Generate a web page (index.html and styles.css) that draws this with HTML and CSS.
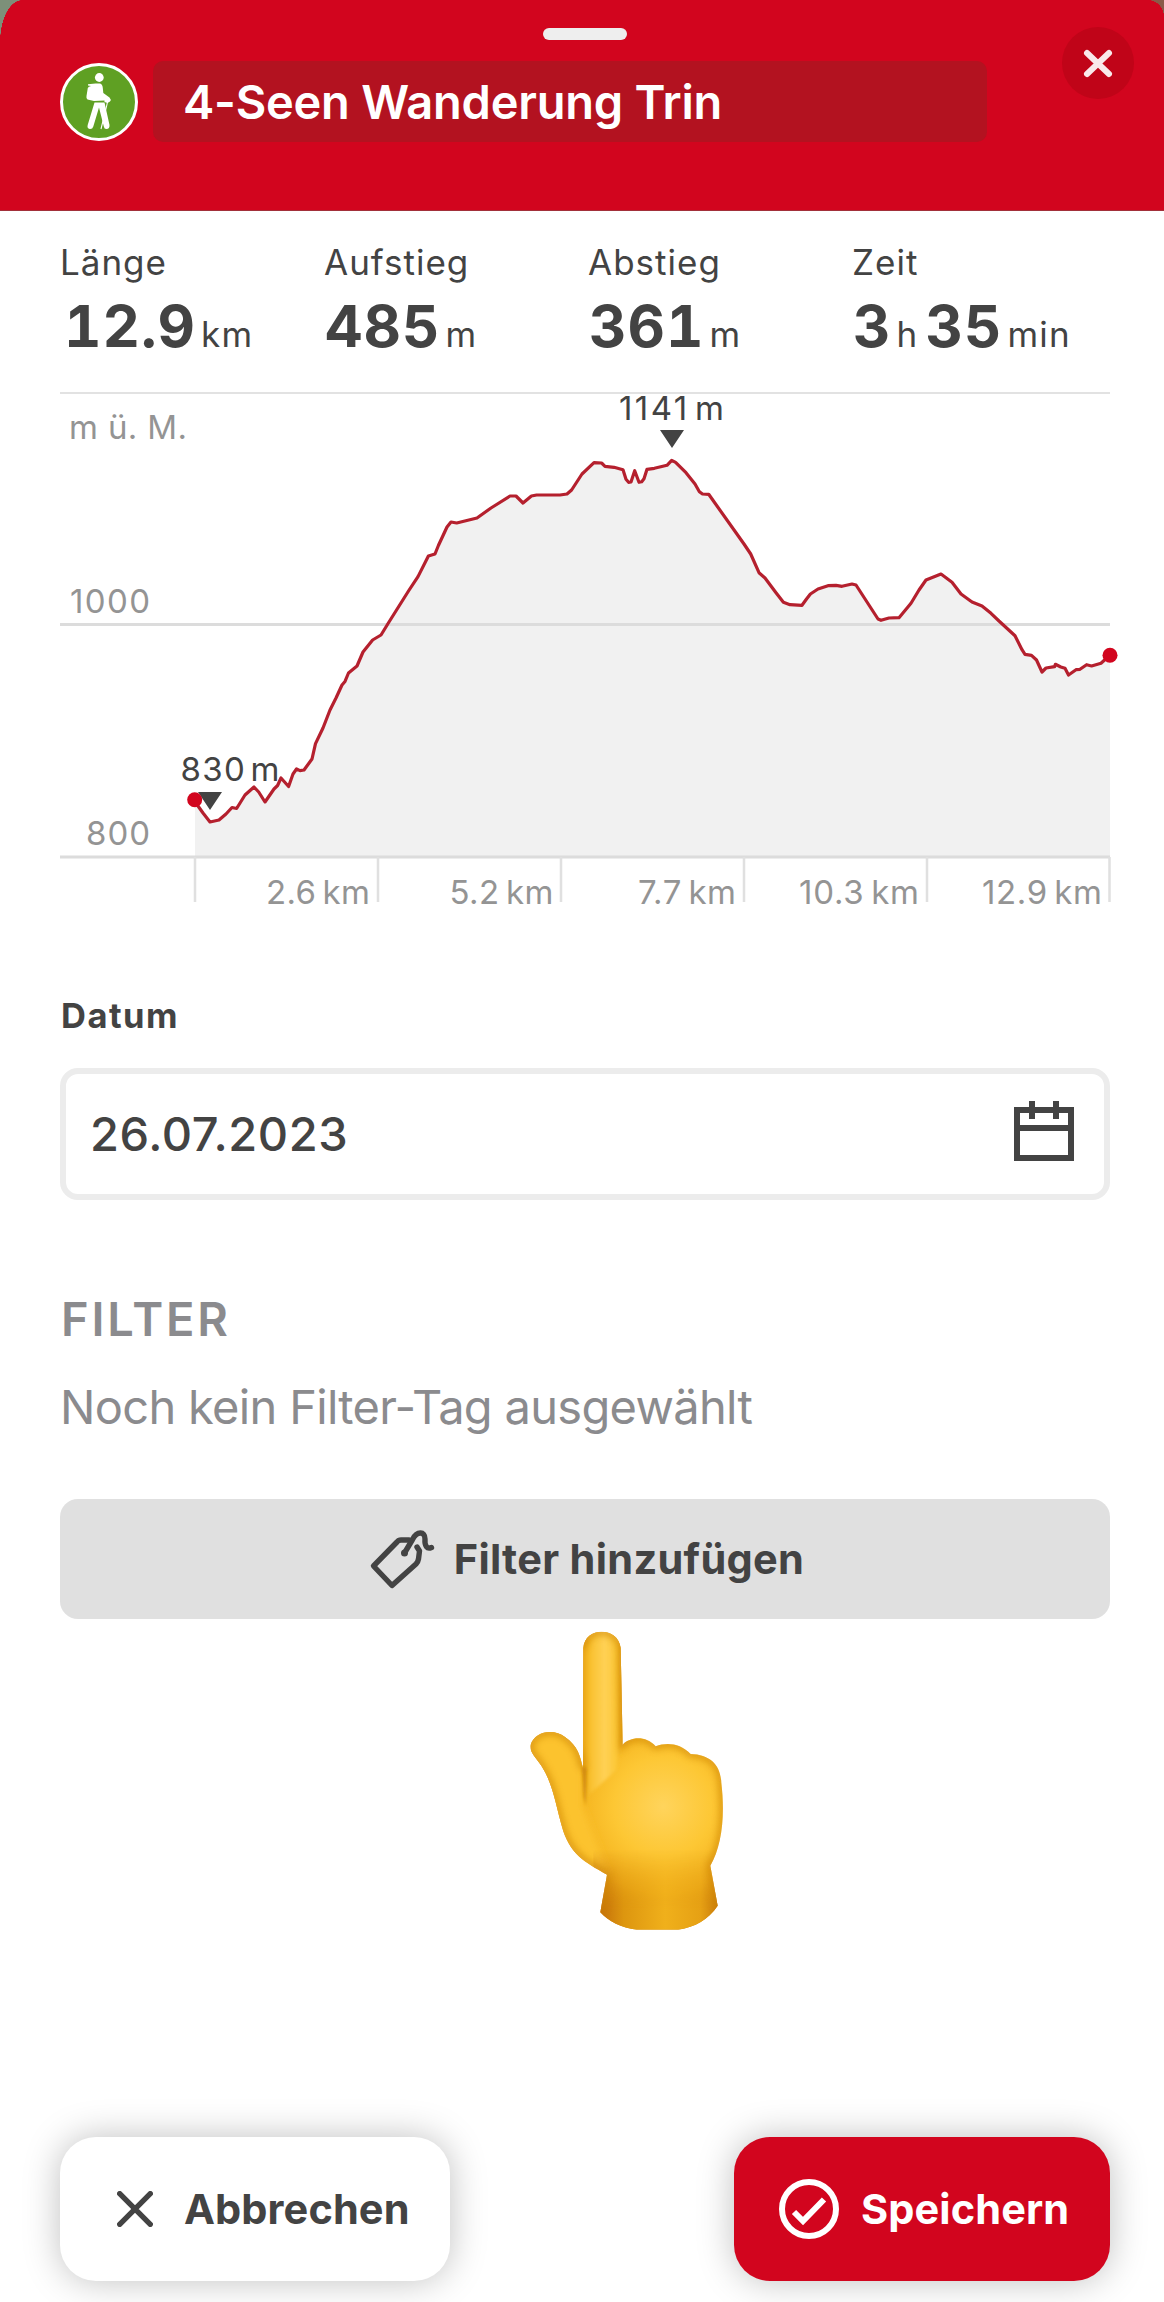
FILE: index.html
```html
<!DOCTYPE html>
<html lang="de">
<head>
  <meta charset="UTF-8" />
  <title>4-Seen Wanderung Trin</title>
  <link rel="stylesheet" href="styles.css">
</head>
<body>
  <header class="sheet-header">
    <div class="grip"></div>
    <button class="close" aria-label="Schliessen">
      <svg width="36" height="36" viewBox="0 0 36 36"><path d="M7 8 L29 29 M29 8 L7 29" /></svg>
    </button>
    <div class="title-row">
      <svg class="hiker" width="80" height="80" viewBox="0 0 80 80">
        <circle cx="40" cy="40" r="37.5" fill="#5fa023" stroke="#fff" stroke-width="3" />
        <circle cx="40.3" cy="15.5" r="4.4" fill="#fff" />
        <path fill="#fff" d="M36.5 21.5 H41 Q43.5 22 43.8 26 L44.3 31 L50.5 35.5 Q52.5 37.5 51 39.5 L48.5 41 L45.5 40 V38.5 L35 39 L28.5 37.5 Q27 36.5 27.5 34 L28.8 26 Q29.5 24.5 32 24 L29 23.6 V22.3 Z" />
        <path fill="#fff" d="M35.5 40.5 H45.5 L50.5 63 Q50.8 66.8 47.5 67 Q45.3 67.2 44.8 64.5 L40 45.5 L34.3 64.5 Q33.5 67.3 30.7 67 Q27.8 66.5 28.7 63 Z" />
        <path fill="none" stroke="#fff" stroke-width="1.1" d="M48.5 40 L47.5 44.5 L42 67" />
      </svg>
      <div class="title-input">4-Seen Wanderung Trin</div>
    </div>
  </header>

  <main class="content">
    <div class="stats">
      <div class="stat">
        <div class="stat-label">Länge</div>
        <div class="stat-value length"><b>12.9</b><span>km</span></div>
      </div>
      <div class="stat">
        <div class="stat-label">Aufstieg</div>
        <div class="stat-value"><b>485</b><span>m</span></div>
      </div>
      <div class="stat">
        <div class="stat-label">Abstieg</div>
        <div class="stat-value"><b>361</b><span>m</span></div>
      </div>
      <div class="stat">
        <div class="stat-label">Zeit</div>
        <div class="stat-value"><b>3</b><span>h</span><b class="next">35</b><span>min</span></div>
      </div>
    </div>

    <svg class="profile" width="1050" height="518" viewBox="60 392 1050 518">
      <path class="area" d="M195 800 L198 806 L203 813 L210 822 L219 820 L226 814 L232 807.5 L236.6 808.5 L245 795 L254 787 L258.7 792 L265 802 L274 789 L277.6 785.5 L281 778 L288.6 786.5 L293 774 L296.5 769 L300 770.6 L304 770 L312 759 L315.5 743.6 L323 728 L330 710 L336 698 L342 685 L345 681.4 L348.5 673 L357 666 L363 652 L372.6 640 L381 635 L389 622 L408.5 591 L418 576.6 L428.4 556 L435 554 L438.4 545.5 L447 527 L451 522 L456.7 523 L477 518 L491 508 L510 496 L516 496 L523 503 L531.4 496 L536.6 495 L560 495 L567 494 L571.6 490 L582 474 L594 462.7 L601.6 463 L605 466.3 L614 467.3 L623 469.7 L626 479.3 L628.6 482.3 L631 482 L634.7 470.7 L639 482.3 L641.7 481.7 L644 478.7 L647 469.3 L654.4 468.3 L667 465.3 L671.7 460.3 L675.6 462.3 L686 472.7 L695 484 L699.4 491.7 L702.5 494 L708.7 494.3 L744 544 L750.7 554 L759 572.7 L765 578 L776 592.7 L783.4 602.3 L790 604.7 L802 605.3 L806.5 599 L810.4 594 L818 589 L828 585.7 L836 585.3 L842 586.3 L852 584 L856 585 L878 619 L881 620.3 L889 618 L899 617.7 L911 603.3 L919 590 L926 580 L941 574 L952 582.3 L961 594 L972 602 L982 606 L991 613.3 L999 621 L1015 635.7 L1022 649.7 L1025 654.3 L1031.5 655.3 L1036.5 660 L1042 672 L1046 668 L1054.6 666.7 L1055.4 664.3 L1060.8 667 L1065 668.3 L1068.5 675 L1076 669.7 L1080 669.3 L1086.6 664.7 L1091.6 666 L1101 663.3 L1110 655 V857 H195 Z" />
      <path class="grid-top" d="M60 393 H1110" />
      <path class="grid" d="M60 624.5 H1110 M60 857 H1110" />
      <path class="tick" d="M195 857 V902 M378 857 V902 M561 857 V902 M744 857 V902 M927 857 V902 M1109.5 857 V902" />
      <text class="axis" x="69" y="439" textLength="118">m ü. M.</text>
      <text class="axis" x="70" y="613" textLength="80">1000</text>
      <text class="axis" x="86" y="845" textLength="64">800</text>
      <text class="axis" x="266" y="904" textLength="104">2.6&#8201;km</text>
      <text class="axis" x="449.5" y="904" textLength="104">5.2&#8201;km</text>
      <text class="axis" x="638" y="904" textLength="98">7.7&#8201;km</text>
      <text class="axis" x="799" y="904" textLength="120">10.3&#8201;km</text>
      <text class="axis" x="982" y="904" textLength="120">12.9&#8201;km</text>
      <path class="line" d="M195 800 L198 806 L203 813 L210 822 L219 820 L226 814 L232 807.5 L236.6 808.5 L245 795 L254 787 L258.7 792 L265 802 L274 789 L277.6 785.5 L281 778 L288.6 786.5 L293 774 L296.5 769 L300 770.6 L304 770 L312 759 L315.5 743.6 L323 728 L330 710 L336 698 L342 685 L345 681.4 L348.5 673 L357 666 L363 652 L372.6 640 L381 635 L389 622 L408.5 591 L418 576.6 L428.4 556 L435 554 L438.4 545.5 L447 527 L451 522 L456.7 523 L477 518 L491 508 L510 496 L516 496 L523 503 L531.4 496 L536.6 495 L560 495 L567 494 L571.6 490 L582 474 L594 462.7 L601.6 463 L605 466.3 L614 467.3 L623 469.7 L626 479.3 L628.6 482.3 L631 482 L634.7 470.7 L639 482.3 L641.7 481.7 L644 478.7 L647 469.3 L654.4 468.3 L667 465.3 L671.7 460.3 L675.6 462.3 L686 472.7 L695 484 L699.4 491.7 L702.5 494 L708.7 494.3 L744 544 L750.7 554 L759 572.7 L765 578 L776 592.7 L783.4 602.3 L790 604.7 L802 605.3 L806.5 599 L810.4 594 L818 589 L828 585.7 L836 585.3 L842 586.3 L852 584 L856 585 L878 619 L881 620.3 L889 618 L899 617.7 L911 603.3 L919 590 L926 580 L941 574 L952 582.3 L961 594 L972 602 L982 606 L991 613.3 L999 621 L1015 635.7 L1022 649.7 L1025 654.3 L1031.5 655.3 L1036.5 660 L1042 672 L1046 668 L1054.6 666.7 L1055.4 664.3 L1060.8 667 L1065 668.3 L1068.5 675 L1076 669.7 L1080 669.3 L1086.6 664.7 L1091.6 666 L1101 663.3 L1110 655" />
      <path class="marker" d="M660 430 H684 L672 448 Z M198 792 H222 L210 810 Z" />
      <text class="peak" x="619" y="420" textLength="105">1141&#8202;m</text>
      <text class="peak" x="180.5" y="781" textLength="99">830&#8202;m</text>
      <circle class="dot" cx="194.7" cy="799.7" r="7.5" />
      <circle class="dot" cx="1110" cy="655.3" r="7.5" />
    </svg>

    <div class="field-label">Datum</div>
    <div class="date-field">
      <span>26.07.2023</span>
      <svg width="60" height="60" viewBox="0 0 60 60"><path d="M3 9 H57 V57 H3 Z M3 27 H57 M18 0 V18 M42 0 V18" /></svg>
    </div>

    <h2 class="filter-title">FILTER</h2>
    <p class="filter-empty">Noch kein Filter-Tag ausgewählt</p>
    <button class="filter-add">
      <svg width="68" height="62" viewBox="368 1527 68 62">
        <path d="M409 1539 H401 Q398.5 1539 397 1541 L373.5 1565 L392 1584.5 L416 1563 Q418 1561 418.5 1558 L419.5 1550 L417 1546" />
        <path d="M404.5 1552 L412.5 1538.5 C417 1530 425 1530 425 1538 C424.5 1545 427 1548.5 431.5 1546.5" />
        <circle cx="404.5" cy="1552" r="3.5" />
      </svg>
      <span>Filter hinzufügen</span>
    </button>

    <svg class="hand" width="194" height="300" viewBox="90 64 582 900">
      <defs>
        <linearGradient id="finger" x1="248" x2="368" y1="0" y2="0" gradientUnits="userSpaceOnUse">
          <stop offset="0" stop-color="#e9a413" />
          <stop offset=".2" stop-color="#f9c12f" />
          <stop offset=".55" stop-color="#ffd155" />
          <stop offset=".85" stop-color="#fcc735" />
          <stop offset="1" stop-color="#e9a516" />
        </linearGradient>
        <radialGradient id="palm" cx="490" cy="590" r="330" gradientUnits="userSpaceOnUse">
          <stop offset="0" stop-color="#ffd45c" />
          <stop offset=".45" stop-color="#fdc734" />
          <stop offset=".8" stop-color="#f3b11c" />
          <stop offset="1" stop-color="#d98d0c" />
        </radialGradient>
        <linearGradient id="wrist" x1="300" x2="655" y1="0" y2="0" gradientUnits="userSpaceOnUse">
          <stop offset="0" stop-color="#c4700a" />
          <stop offset=".2" stop-color="#dd960f" />
          <stop offset=".55" stop-color="#f0b01b" />
          <stop offset=".85" stop-color="#e6a114" />
          <stop offset="1" stop-color="#c97c0b" />
        </linearGradient>
        <linearGradient id="fade" x1="0" x2="0" y1="720" y2="900" gradientUnits="userSpaceOnUse">
          <stop offset="0" stop-color="#000" />
          <stop offset="1" stop-color="#fff" />
        </linearGradient>
        <mask id="low"><rect x="90" y="640" width="600" height="330" fill="url(#fade)" /></mask>
        <clipPath id="shape"><path d="M250 115 C254 50 355 50 362 115 L368 405 C393 380 438 378 467 410 C500 397 540 400 572 433 C630 435 662 465 664 520 C676 620 665 710 631 768 L653 888 C625 930 585 952 535 960 H410 C365 955 325 935 301 908 L321 795 C250 755 215 735 190 665 C165 580 160 525 125 470 C105 440 88 428 92 405 C105 365 160 355 195 382 C235 410 240 440 249 475 Z" /></clipPath>
        <filter id="soft" x="-20%" y="-20%" width="140%" height="140%"><feGaussianBlur stdDeviation="11" /></filter>
        <filter id="crease" x="-300%" y="-30%" width="700%" height="160%"><feGaussianBlur stdDeviation="4" /></filter>
      </defs>
      <g clip-path="url(#shape)">
        <rect x="80" y="50" width="600" height="920" fill="url(#palm)" />
        <path fill="#fcc32f" d="M80 350 H249 V590 L330 800 H200 L80 500 Z" filter="url(#soft)" />
        <path fill="url(#finger)" d="M240 50 H370 V380 L350 480 L262 560 L248 480 Z" filter="url(#crease)" />
        <rect x="280" y="640" width="400" height="330" fill="url(#wrist)" mask="url(#low)" />
        <path fill="none" stroke="#cf8609" stroke-width="18" opacity=".75" filter="url(#soft)" d="M250 115 C254 50 355 50 362 115 L368 405 C393 380 438 378 467 410 C500 397 540 400 572 433 C630 435 662 465 664 520 C676 620 665 710 631 768 L653 888 M301 908 L321 795 C250 755 215 735 190 665 C165 580 160 525 125 470 C105 440 88 428 92 405 C105 365 160 355 195 382 C235 410 240 440 249 475" />
        <path fill="#d08a0c" d="M246 470 L260 475 L257 590 L251 560 Z" filter="url(#crease)" />
      </g>
    </svg>

    <div class="actions">
      <button class="btn cancel">
        <svg width="36" height="36" viewBox="0 0 36 36"><path d="M2.7 2.7 L33.3 33.3 M33.3 2.7 L2.7 33.3" /></svg>
        <span>Abbrechen</span>
      </button>
      <button class="btn save">
        <svg width="60" height="60" viewBox="0 0 60 60"><circle cx="30" cy="30" r="27" /><path d="M15 33 L24 42 L45 20.5" /></svg>
        <span>Speichern</span>
      </button>
    </div>
  </main>
</body>
</html>
```
FILE: styles.css
```css
* { box-sizing: border-box; }
body {
  margin: 0; min-height: 2302px;
  display: flex; flex-direction: column;
  font-family: Inter, "Liberation Sans", sans-serif;
  color: #434343; background: #fff;
}
button { border: none; padding: 0; font-family: inherit; color: inherit; cursor: pointer; }
svg { display: block; flex: none; }

.sheet-header {
  position: relative;
  height: 211px; padding: 28px 0 0 60px;
  background: radial-gradient(ellipse 22px 42px at 22px 42px, #d2051e 99%, transparent) 0 0 / 22px 42px no-repeat,
    radial-gradient(ellipse 16px 17px at 0 17px, #d2051e 99%, transparent) 100% 0 / 16px 17px no-repeat,
    linear-gradient(#d2051e, #d2051e) 22px 0 / calc(100% - 38px) 100% no-repeat,
    linear-gradient(#d2051e, #d2051e) 0 42px / 22px 100% no-repeat,
    linear-gradient(#d2051e, #d2051e) 100% 17px / 16px 100% no-repeat,
    linear-gradient(90deg, #7d9079 50%, #8a5a48 50%);
  border-bottom: 1px solid #a2303a;
}
.grip { width: 84px; height: 12px; margin-left: 483px; border-radius: 6px; background: #eee; }
.close {
  position: absolute; top: 27px; right: 30px;
  width: 72px; height: 72px; border-radius: 50%;
  display: flex; align-items: center; justify-content: center;
  background: #c00418;
}
.close path { stroke: #f9e9ea; stroke-width: 6; stroke-linecap: round; }
.title-row { display: flex; align-items: center; gap: 14px; margin-top: 21px; }
.hiker { margin-left: -1px; }
.title-input {
  width: 834px; height: 81px; padding-left: 30px;
  border-radius: 10px; background: #b31220;
  color: #fff; font-size: 47px; font-weight: 600; line-height: 82px; letter-spacing: -.24px;
}

.content { flex: 1; display: flex; flex-direction: column; padding: 0 54px 21px 60px; }
.stats { display: grid; grid-template-columns: repeat(4, 264px); margin: 26px -6px 24px 0; }
.stat-label { font-size: 35px; line-height: 50px; letter-spacing: 1px; }
.stat-value { display: flex; align-items: baseline; margin-top: 5px; padding-left: 1px; line-height: 68px; }
.stat-value.length { padding-left: 4px; }
.stat-value b {
  font-size: 58px; font-weight: 700; letter-spacing: 1px;
  font-variant-numeric: tabular-nums;
}
.stat-value span { margin-left: 5px; font-size: 35px; letter-spacing: 1.2px; }
.stat-value .next { margin-left: 7px; }

.profile { overflow: visible; }
.area { fill: #f1f1f1; }
.grid-top { stroke: #e2e2e2; stroke-width: 2; }
.grid { stroke: #dcdcdc; stroke-width: 3; }
.tick { stroke: #e0e0e0; stroke-width: 2.5; }
.line { fill: none; stroke: #b5202e; stroke-width: 3.2; stroke-linejoin: round; }
.axis { font-size: 33px; fill: #949494; }
.peak { font-size: 33px; fill: #434343; }
.marker { fill: #434343; }
.dot { fill: #d2051e; }

.field-label { margin-top: 81px; padding-left: 1px; font-size: 34.5px; font-weight: 700; line-height: 50px; letter-spacing: 1.5px; }
.date-field {
  display: flex; align-items: center; justify-content: space-between;
  height: 132px; margin-top: 27px; padding: 0 30px 0 24px;
  border: 6px solid #ececec; border-radius: 18px;
  font-size: 47px; font-weight: 500; line-height: 60px; letter-spacing: .6px;
}
.date-field svg { margin-bottom: 6px; }
.date-field path { fill: none; stroke: #434343; stroke-width: 6; }

.filter-title { margin: 89px 0 0 1px; color: #8b8b8e; font-size: 47px; font-weight: 600; line-height: 60px; letter-spacing: 2.8px; }
.filter-empty { margin: 28px 0 0; color: #8b8b8e; font-size: 47px; line-height: 60px; letter-spacing: -.68px; }
.filter-add {
  display: flex; align-items: center; justify-content: center; gap: 18px;
  height: 120px; margin-top: 62px; padding-left: 2px; border-radius: 18px;
  background: #e0e0e0;
  font-size: 41.5px; font-weight: 700; letter-spacing: .3px;
}
.filter-add path { fill: none; stroke: #434343; stroke-width: 5.4; stroke-linecap: round; stroke-linejoin: round; }
.filter-add circle { fill: #434343; }

.hand { margin: 12px 0 0 470px; }

.actions { display: flex; justify-content: space-between; margin-top: auto; }
.btn {
  display: flex; align-items: center;
  height: 144px; border-radius: 36px;
  box-shadow: 0 0 36px rgba(0,0,0,.25);
  font-size: 41.5px; font-weight: 700; letter-spacing: .1px;
}
.cancel { width: 390px; padding-left: 57px; gap: 31px; background: #fff; }
.cancel path { stroke: #434343; stroke-width: 5.4; stroke-linecap: round; }
.save { width: 376px; padding-left: 45px; gap: 22px; background: #d2051e; color: #fff; }
.save circle, .save path { fill: none; stroke: #fff; stroke-width: 6; }
```
